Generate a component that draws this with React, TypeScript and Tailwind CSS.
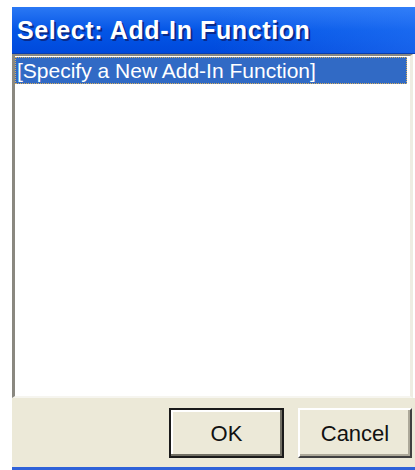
export default function App() {
  return (
    <div className="w-[415px] h-[470px] bg-white pt-[7px] pl-[12px] flex flex-col overflow-hidden">
      {/* caption */}
      <div className="h-[46px] shrink-0 flex items-center pl-[5px] bg-gradient-to-b from-[#2a78f4] via-[#0456e6] to-[#0049dc] relative">
        <div className="absolute inset-0 bg-gradient-to-r from-transparent via-transparent to-[#3a86ff]/40" />
        <span
          className="relative text-white font-bold text-[25px] leading-none tracking-[0.6px] [text-shadow:2px_2px_0_#0a2a8a]"
          style={{ fontFamily: '"Liberation Sans", sans-serif' }}
        >
          Select: Add-In Function
        </span>
      </div>
      <div className="h-px shrink-0 bg-[#0a3cb0]" />

      {/* list */}
      <div className="flex-1 bg-white border-t-2 border-l-[3px] border-r-[3px] border-b-2 border-t-[#8a8880] border-l-[#8a8880] border-r-[#eeece2] border-b-[#f6f5ef] mr-[2px] pt-px pr-[3px]">
        <div
          className="h-[27px] flex items-center pl-px bg-[#316ac5] border border-dotted border-[#d6ad5e] text-white text-[21px] leading-none"
          style={{ fontFamily: '"Liberation Sans", sans-serif' }}
        >
          [Specify a New Add-In Function]
        </div>
      </div>

      {/* buttons */}
      <div className="h-[69px] shrink-0 bg-[#ece9d8] flex items-start justify-end gap-[14px] pt-[10px] pr-[3px]" style={{ fontFamily: '"Liberation Sans", sans-serif' }}>
        <button className="w-[115px] h-[50px] border-2 border-[#1a1a1a] bg-[#ece9d8] text-[22px] text-[#111] shadow-[inset_-2px_-2px_0_#716f64,inset_2px_2px_0_#ffffff]">
          OK
        </button>
        <button className="w-[114px] h-[50px] bg-[#ece9d8] text-[22px] text-[#111] border-t-2 border-l-2 border-t-white border-l-white border-r-2 border-b-2 border-r-[#404040] border-b-[#404040] shadow-[inset_-2px_-2px_0_#aca899]">
          Cancel
        </button>
      </div>
      <div className="h-[3px] shrink-0 bg-[#2f62d9]" />
    </div>
  )
}
